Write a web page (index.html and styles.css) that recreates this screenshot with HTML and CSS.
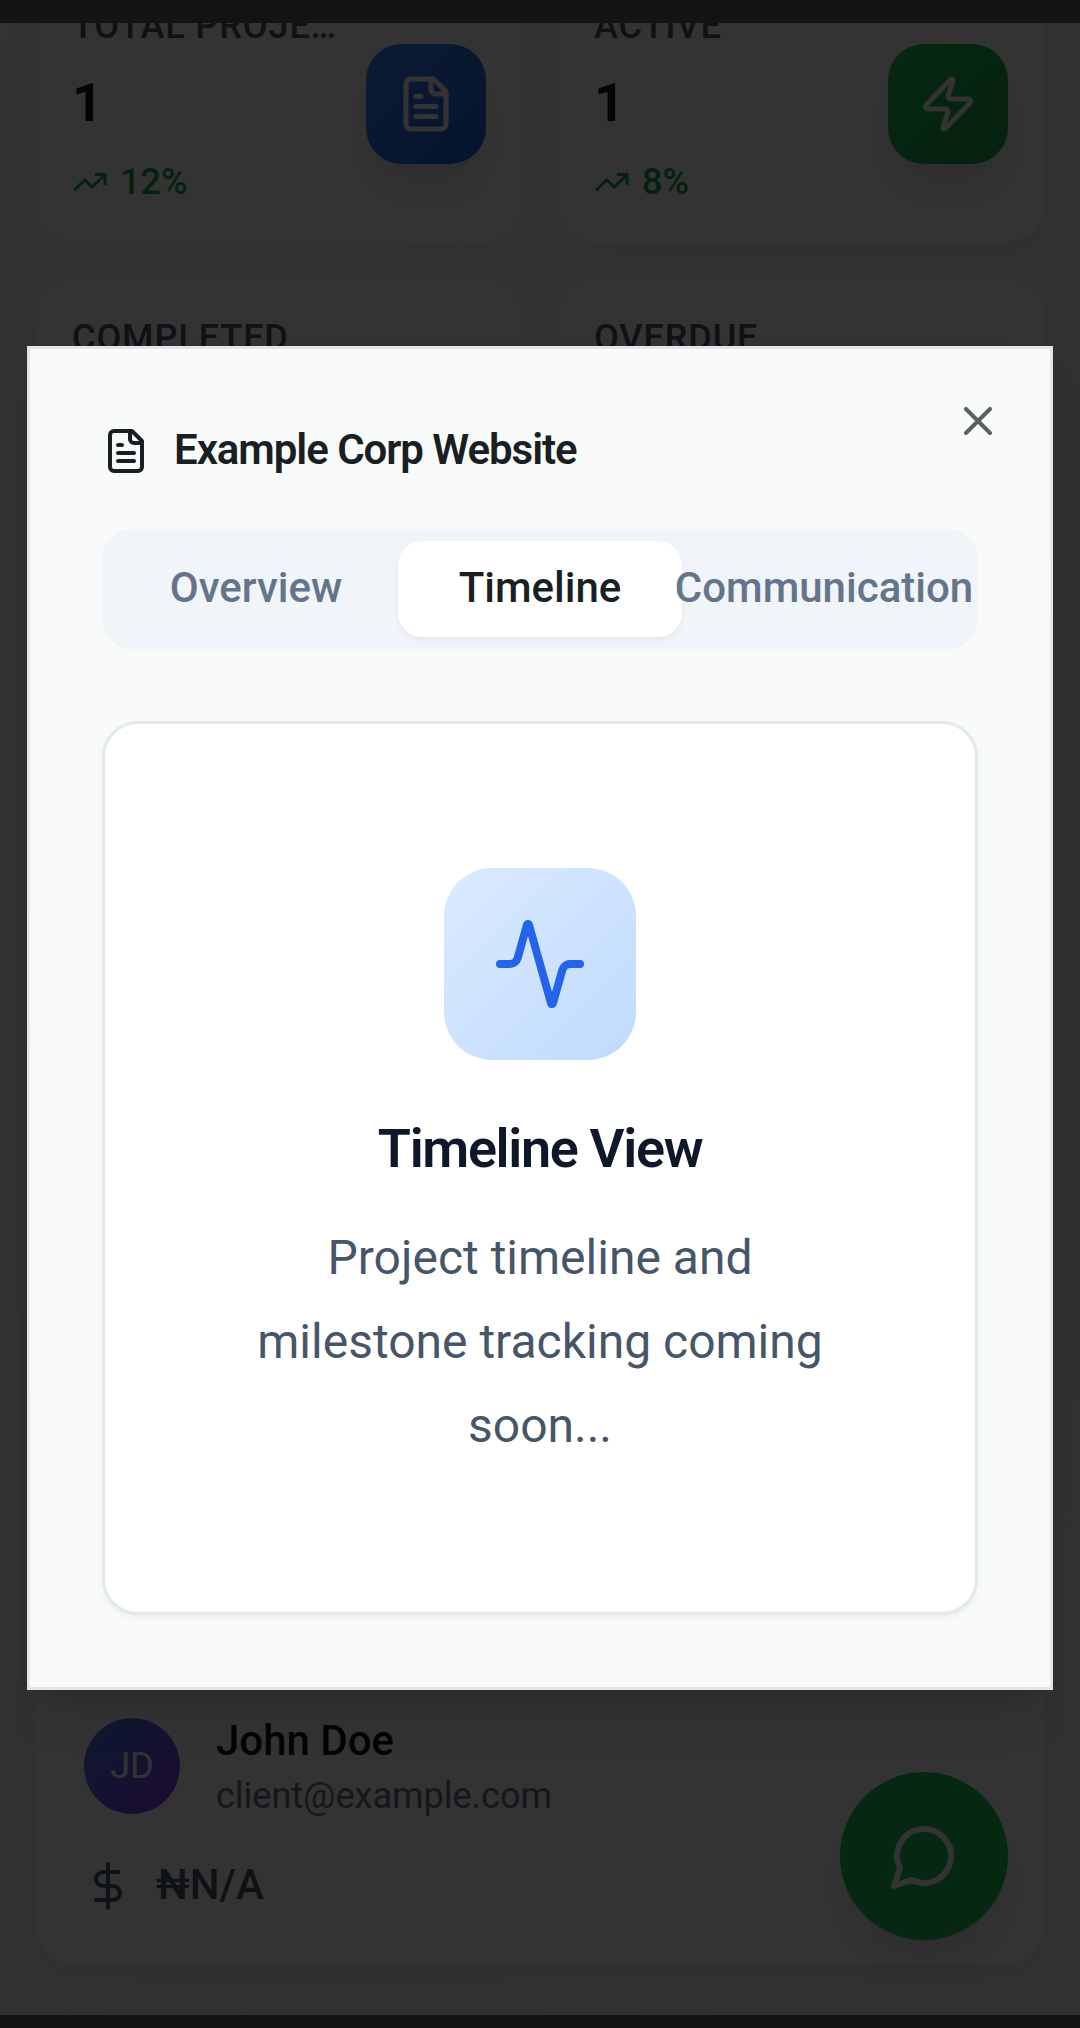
FILE: index.html
```html
<!DOCTYPE html>
<html lang="en">
<head>
<meta charset="utf-8">
<title>Projects</title>
<link rel="stylesheet" href="styles.css">
</head>
<body>
<div class="device">
  <div class="status-bar"></div>
  <div class="viewport">
    <main class="page">
      <section class="stats">
        <article class="card stat">
          <div class="stat-body">
            <div class="stat-label">TOTAL PROJE…</div>
            <div class="stat-value">1</div>
            <div class="trend"><svg class="icon i36" viewBox="0 0 24 24"><path d="M22 7l-8.500 8.500-5-5L2 17"/><path d="M16 7h6v6"/></svg>12%</div>
          </div>
          <div class="stat-icon blue"><svg class="icon i60" viewBox="0 0 24 24"><path d="M15 2H6a2 2 0 0 0-2 2v16a2 2 0 0 0 2 2h12a2 2 0 0 0 2-2V7Z"/><path d="M14 2v4a2 2 0 0 0 2 2h4"/><path d="M10 9H8M16 13H8M16 17H8"/></svg></div>
        </article>
        <article class="card stat">
          <div class="stat-body">
            <div class="stat-label">ACTIVE</div>
            <div class="stat-value">1</div>
            <div class="trend"><svg class="icon i36" viewBox="0 0 24 24"><path d="M22 7l-8.500 8.500-5-5L2 17"/><path d="M16 7h6v6"/></svg>8%</div>
          </div>
          <div class="stat-icon green"><svg class="icon i60" viewBox="0 0 24 24"><path d="M4 14a1 1 0 0 1-.78-1.630l9.900-10.200a.5.5 0 0 1 .86.46l-1.920 6.020A1 1 0 0 0 13 10h7a1 1 0 0 1 .78 1.630l-9.900 10.200a.5.5 0 0 1-.86-.46l1.920-6.020A1 1 0 0 0 11 14z"/></svg></div>
        </article>
        <article class="card stat"><div class="stat-body"><div class="stat-label">COMPLETED</div></div></article>
        <article class="card stat"><div class="stat-body"><div class="stat-label">OVERDUE</div></div></article>
      </section>
      <article class="card project">
        <div class="client">
          <div class="avatar">JD</div>
          <div>
            <div class="client-name">John Doe</div>
            <div class="client-mail">client@example.com</div>
          </div>
        </div>
        <div class="budget"><svg class="icon i48" viewBox="0 0 24 24"><path d="M12 1v22M17 5H9.500a3.500 3.500 0 0 0 0 7h5a3.500 3.500 0 0 1 0 7H6"/></svg><span class="amount">₦N/A</span></div>
      </article>
    </main>
    <button class="fab"><svg class="icon i72" viewBox="0 0 24 24"><path d="M7.900 20A9 9 0 1 0 4 16.100L2 22Z"/></svg></button>
    <div class="overlay">
      <section class="modal">
        <button class="close"><svg class="icon i48" viewBox="0 0 24 24"><path d="M18 6 6 18M6 6l12 12"/></svg></button>
        <h2 class="modal-title"><svg class="icon i48" viewBox="0 0 24 24"><path d="M15 2H6a2 2 0 0 0-2 2v16a2 2 0 0 0 2 2h12a2 2 0 0 0 2-2V7Z"/><path d="M14 2v4a2 2 0 0 0 2 2h4"/><path d="M10 9H8M16 13H8M16 17H8"/></svg><span class="modal-name">Example Corp Website</span></h2>
        <div class="tabs">
          <div class="tab">Overview</div>
          <div class="tab active">Timeline</div>
          <div class="tab">Communication</div>
        </div>
        <div class="panel">
          <div class="panel-icon"><svg class="icon i96" viewBox="0 0 24 24"><path d="M22 12h-2.480a2 2 0 0 0-1.930 1.460l-2.350 8.360a.25.25 0 0 1-.48 0L9.240 2.180a.25.25 0 0 0-.48 0l-2.350 8.360A2 2 0 0 1 4.490 12H2"/></svg></div>
          <h3 class="panel-title">Timeline View</h3>
          <p class="panel-text">Project timeline and milestone tracking coming soon...</p>
        </div>
      </section>
    </div>
  </div>
  <div class="nav-bar"></div>
</div>
</body>
</html>
```
FILE: styles.css
```css
* { box-sizing: border-box; margin: 0; padding: 0; }
body { font-family: Roboto, sans-serif; background: #131313; overflow: hidden; }
button { border: 0; background: none; font: inherit; color: inherit; }
.device { display: flex; flex-direction: column; width: 1080px; height: 2028px; }
.status-bar { height: 23px; background: #131313; }
.nav-bar { height: 13px; background: #111212; }
.viewport { position: relative; flex: 1; min-height: 0; overflow: hidden; background: linear-gradient(120deg, #fafcfb, #f3f6fa 60%, #f5f7f9); }

.icon { display: block; flex: none; fill: none; stroke: currentColor; stroke-width: 2; stroke-linecap: round; stroke-linejoin: round; }
.i36 { width: 36px; height: 36px; }
.i48 { width: 48px; height: 48px; }
.i60 { width: 60px; height: 60px; }
.i72 { width: 72px; height: 72px; }
.i96 { width: 96px; height: 96px; }

.page { display: flex; flex-direction: column; gap: 36px; margin-top: -57px; padding: 0 36px; }
.stats { display: grid; grid-template-columns: 1fr 1fr; grid-auto-rows: 276px; gap: 36px; }
.card { background: #fff; border-radius: 36px; box-shadow: 0 12px 30px rgba(15, 23, 42, .05); }
.stat { display: flex; align-items: center; justify-content: space-between; padding: 36px; }
.stat-body { align-self: flex-start; }
.stat-label { font-size: 36px; line-height: 48px; font-weight: 500; letter-spacing: .9px; color: #475569; white-space: nowrap; }
.stat-value { margin-top: 12px; font-size: 54px; line-height: 81px; font-weight: 700; color: #0f172a; }
.trend { display: flex; align-items: center; gap: 12px; margin-top: 15px; font-size: 36px; line-height: 48px; font-weight: 500; color: #16a34a; }
.stat-icon { display: flex; align-items: center; justify-content: center; width: 120px; height: 120px; border-radius: 36px; color: #fff; box-shadow: 0 30px 45px -9px rgba(0, 0, 0, .1), 0 12px 18px -12px rgba(0, 0, 0, .1); }
.blue { background: linear-gradient(135deg, #3b82f6, #2563eb); }
.green { background: linear-gradient(135deg, #22c55e, #16a34a); }

.project { display: flex; flex-direction: column; justify-content: flex-end; gap: 36px; height: 1374px; padding: 48px; }
.client { display: flex; align-items: center; gap: 36px; }
.avatar { width: 96px; height: 96px; border-radius: 50%; background: linear-gradient(135deg, #3b82f6, #9333ea); color: #fff; font-size: 36px; line-height: 96px; text-align: center; }
.client-name { height: 60px; font-size: 42px; line-height: 58px; font-weight: 500; color: #0f172a; }
.client-mail { font-size: 36px; line-height: 48px; color: #64748b; }
.budget { display: flex; align-items: center; gap: 24px; height: 60px; font-size: 42px; line-height: 58px; font-weight: 500; color: #475569; }
.amount { height: 60px; }

.fab { position: absolute; right: 72px; bottom: 75px; display: flex; align-items: center; justify-content: center; width: 168px; height: 168px; border-radius: 50%; background: #22c55e; color: #fff; box-shadow: 0 30px 45px -9px rgba(0, 0, 0, .1), 0 12px 18px -12px rgba(0, 0, 0, .1); }

.overlay { position: absolute; inset: 0; padding: 323px 27px 0; background: rgba(0, 0, 0, .8); }
.modal { position: relative; height: 1344px; padding: 72px; border: 3px solid #e4e5ea; background: #f9fbfa; box-shadow: 0 30px 45px -9px rgba(0, 0, 0, .1), 0 12px 18px -12px rgba(0, 0, 0, .1); color: #1a1f24; }
.close { position: absolute; top: 48px; right: 48px; opacity: .7; }
.modal-title { display: flex; align-items: center; gap: 24px; height: 60px; font-size: 42px; font-weight: 600; letter-spacing: -1.050px; }
.modal-name { padding-bottom: 4px; }
.tabs { display: grid; grid-template-columns: repeat(3, 284px); height: 120px; margin-top: 48px; padding: 12px; border-radius: 30px; background: #f1f4f9; }
.tab { display: flex; align-items: center; justify-content: center; padding-bottom: 4px; border-radius: 24px; font-size: 42px; font-weight: 500; color: #64748b; }
.tab.active { background: #fff; color: #1a1f24; box-shadow: 0 3px 6px rgba(0, 0, 0, .05); }
.panel { display: flex; flex-direction: column; align-items: center; height: 894px; margin-top: 72px; padding: 144px; border: 3px solid #e2e8f0; border-radius: 36px; background: #fff; box-shadow: 0 3px 6px rgba(0, 0, 0, .05); text-align: center; }
.panel-icon { display: flex; align-items: center; justify-content: center; width: 192px; height: 192px; border-radius: 48px; background: linear-gradient(135deg, #dbeafe, #bfdbfe); color: #2563eb; }
.panel-title { height: 84px; margin-top: 48px; font-size: 54px; line-height: 82px; font-weight: 600; letter-spacing: -1.350px; color: #0f172a; }
.panel-text { margin-top: 24px; font-size: 48px; line-height: 84px; color: #475569; }
```
